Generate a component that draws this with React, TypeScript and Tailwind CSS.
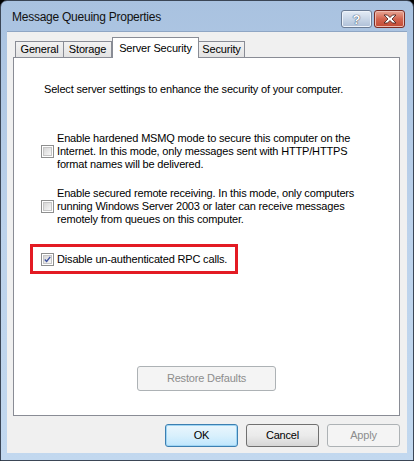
import React from "react";

type BoxProps = {
  checked?: boolean;
};

function CheckBox({ checked }: BoxProps) {
  return (
    <div className="w-[13px] h-[13px] shrink-0 border border-[#8e8f8f] bg-white p-[1px]">
      <div className="w-full h-full border border-[#c5c5c5] bg-gradient-to-br from-[#d6d6d6] to-[#f7f7f7] flex items-center justify-center">
        {checked && (
          <svg width="9" height="9" viewBox="0 0 9 9">
            <path d="M1 4.5 L3.4 7 L8 1.2" fill="none" stroke="#3d52a1" strokeWidth="1.8" />
          </svg>
        )}
      </div>
    </div>
  );
}

type BtnProps = {
  label: string;
  width: string;
  height?: string;
  variant?: "default" | "normal" | "disabled";
};

function Btn({ label, width, variant = "normal" }: BtnProps) {
  let cls = "border-[#707070] bg-gradient-to-b from-[#f2f2f2] via-[#ebebeb] to-[#d6d6d6] text-black";
  if (variant === "default")
    cls = "border-[#3c7fb1] bg-gradient-to-b from-[#eaf6fd] via-[#d9f0fc] to-[#bee6fd] text-black shadow-[inset_0_0_0_1px_#9fd5f4]";
  if (variant === "disabled") cls = "border-[#adb2b5] bg-[#f4f4f4] text-[#8d8d8d]";
  return (
    <div className={`${width} h-full border rounded-[3px] flex items-center justify-center ${cls}`}>
      {label}
    </div>
  );
}

export default function App() {
  return (
    <div className="w-[414px] h-[461px] bg-black font-['Liberation_Sans',Arial,sans-serif] text-[11px] tracking-[-0.17px] text-black">
      <div className="w-full h-full border border-[#3b4656] rounded-t-[7px] bg-gradient-to-b from-[#a9c2e0] via-[#bcd2eb] to-[#c2d8ef] flex flex-col">
        {/* title bar */}
        <div className="h-[30px] flex items-center justify-between pl-[11px] pr-[8px]">
          <span className="text-[12px] tracking-[-0.25px] mt-[2px] text-[#111]">Message Queuing Properties</span>
          <div className="flex gap-[2px] self-start mt-[9px]">
            <div className="w-[31px] h-[18px] rounded-[3px] border border-[#6b7c95] bg-gradient-to-b from-[#e4ecf6] via-[#c9d6e7] to-[#aebfd7] flex items-center justify-center shadow-[inset_0_0_0_1px_#eef3fa]">
              <span className="text-white font-bold text-[13px] leading-none [text-shadow:0_0_1px_#2d3d57,0_0_1px_#2d3d57]">?</span>
            </div>
            <div className="w-[31px] h-[18px] rounded-[3px] border border-[#7a2c24] bg-gradient-to-b from-[#e8a796] via-[#d2644f] to-[#c24a33] flex items-center justify-center shadow-[inset_0_0_0_1px_#eebbb0]">
              <svg width="14" height="10" viewBox="0 0 14 10">
                <path
                  d="M1 1 H4.5 L7 3.5 L9.5 1 H13 L9 5 L13 9 H9.5 L7 6.5 L4.5 9 H1 L5 5 Z"
                  fill="#fff"
                  stroke="#3b1a16"
                  strokeWidth="0.8"
                  strokeLinejoin="round"
                />
              </svg>
            </div>
          </div>
        </div>

        {/* client area */}
        <div className="mx-[6px] flex-1 bg-[#f0f0f0] border-t border-[#8fa6c4] flex flex-col pl-[6px] pr-[7px] pt-[5px] pb-[6px]">
          {/* tabs */}
          <div className="h-[20px] flex items-end pl-[2px]">
            <div className="w-[49px] h-[16px] border border-b-0 border-[#898c95] bg-gradient-to-b from-[#f2f2f2] to-[#e3e3e3] flex items-center justify-center">
              General
            </div>
            <div className="w-[48px] h-[16px] border border-b-0 border-l-0 border-[#898c95] bg-gradient-to-b from-[#f2f2f2] to-[#e3e3e3] flex items-center justify-center">
              Storage
            </div>
            <div className="relative z-10 w-[87px] h-[21px] -mb-[1px] border border-b-0 border-[#898c95] bg-white flex items-start justify-center pt-[2px]">
              Server Security
            </div>
            <div className="w-[46px] h-[16px] border border-b-0 border-l-0 border-[#898c95] bg-gradient-to-b from-[#f2f2f2] to-[#e3e3e3] flex items-center justify-center">
              Security
            </div>
          </div>

          {/* panel */}
          <div className="h-[359px] border border-[#898c95] bg-white flex flex-col leading-[13px]">
            <p className="pl-[30px] pt-[25px]">Select server settings to enhance the security of your computer.</p>

            <div className="flex items-center gap-[3px] pl-[27px] mt-[36px]">
              <CheckBox />
              <p>
                Enable hardened MSMQ mode to secure this computer on the
                <br />
                Internet. In this mode, only messages sent with HTTP/HTTPS
                <br />
                format names will be delivered.
              </p>
            </div>

            <div className="flex items-center gap-[3px] pl-[27px] mt-[16px]">
              <CheckBox />
              <p>
                Enable secured remote receiving. In this mode, only computers
                <br />
                running Windows Server 2003 or later can receive messages
                <br />
                remotely from queues on this computer.
              </p>
            </div>

            <div className="ml-[16px] mt-[18px] w-[208px] h-[30px] border-[3px] border-[#e31b23] flex items-center gap-[3px] pl-[8px]">
              <CheckBox checked />
              <p>Disable un-authenticated RPC calls.</p>
            </div>

            <div className="ml-[123px] mt-[92px] h-[25px] flex">
              <Btn label="Restore Defaults" width="w-[139px]" variant="disabled" />
            </div>
          </div>

          {/* buttons */}
          <div className="mt-[8px] h-[23px] flex justify-end gap-[8px]">
            <Btn label="OK" width="w-[73px]" variant="default" />
            <Btn label="Cancel" width="w-[73px]" />
            <Btn label="Apply" width="w-[73px]" variant="disabled" />
          </div>
        </div>
        <div className="h-[7px]" />
      </div>
    </div>
  );
}
